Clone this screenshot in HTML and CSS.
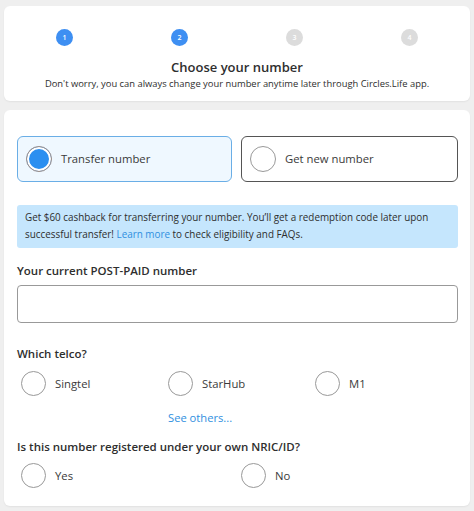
FILE: index.html
```html
<!DOCTYPE html>
<html lang="en">
<head>
    <meta charset="UTF-8">
    <meta name="viewport" content="width=device-width, initial-scale=1.0">
    <title>Choose your number</title>
    <link rel="stylesheet" href="styles.css">
</head>
<body>
    <div class="card steps-card">
        <ul class="steps">
            <li class="step done">1</li>
            <li class="step done">2</li>
            <li class="step">3</li>
            <li class="step">4</li>
        </ul>
        <h2>Choose your number</h2>
        <p class="subtitle">Don't worry, you can always change your number anytime later through Circles.Life app.</p>
    </div>

    <div class="card form-card">
        <div class="options">
            <div class="option selected">
                <span class="radio checked"></span>
                <span>Transfer number</span>
            </div>
            <div class="option">
                <span class="radio"></span>
                <span>Get new number</span>
            </div>
        </div>

        <div class="info">
            Get $60 cashback for transferring your number. You’ll get a redemption code later upon successful transfer! <a href="#">Learn more</a> to check eligibility and FAQs.
        </div>

        <label class="field-label" for="number">Your current POST-PAID number</label>
        <input type="text" id="number" class="text-input">

        <div class="field-label">Which telco?</div>
        <div class="choices three">
            <div class="choice"><span class="radio"></span>Singtel</div>
            <div class="choice"><span class="radio"></span>StarHub</div>
            <div class="choice"><span class="radio"></span>M1</div>
        </div>
        <div class="more-row">
            <a href="#" class="more">See others...</a>
        </div>

        <div class="field-label">Is this number registered under your own NRIC/ID?</div>
        <div class="choices two">
            <div class="choice"><span class="radio"></span>Yes</div>
            <div class="choice"><span class="radio"></span>No</div>
        </div>
    </div>
</body>
</html>
```

FILE: styles.css
```css
body {
    font-family: 'Open Sans', 'Noto Sans', sans-serif;
    margin: 0;
    padding: 6px 4px 5px 4px;
    background-color: #efefef;
    color: #2e2e2e;
}

.card {
    background-color: #ffffff;
    border-radius: 6px;
    box-shadow: 0px 1px 2px rgba(0, 0, 0, 0.06);
}

.steps-card {
    height: 95px;
    box-sizing: border-box;
    padding-top: 23px;
    text-align: center;
}

.steps {
    list-style: none;
    margin: 0;
    padding: 0 0 0 52px;
    display: flex;
    gap: 98px;
}

.step {
    width: 17px;
    height: 17px;
    flex-shrink: 0;
    border-radius: 50%;
    background-color: #dcdcdc;
    color: #ffffff;
    font-size: 7px;
    font-weight: 600;
    line-height: 17px;
    text-align: center;
}

.step.done {
    background-color: #3e8ff2;
}

.steps-card h2 {
    margin: 11px 0 0 0;
    font-size: 13px;
    font-weight: 600;
    line-height: 20px;
    color: #2e2e2e;
}

.subtitle {
    margin: 0;
    font-size: 9.4px;
    line-height: 14px;
}

.form-card {
    margin-top: 9px;
    height: 396px;
    box-sizing: border-box;
    padding: 26px 12px 0 13px;
}

.options {
    display: grid;
    grid-template-columns: 215px 217px;
    gap: 9px;
}

.option {
    height: 46px;
    box-sizing: border-box;
    border: 1px solid #555555;
    border-radius: 6px;
    display: flex;
    align-items: center;
    padding-left: 8px;
    padding-bottom: 1px;
    font-size: 11.3px;
    color: #3a3a3a;
}

.option.selected {
    border-color: #6aaee6;
    background-color: #eff8ff;
}

.radio {
    width: 25px;
    height: 25px;
    box-sizing: border-box;
    border: 1px solid #999999;
    border-radius: 50%;
    background-color: #ffffff;
    margin-right: 9px;
    flex-shrink: 0;
}

.option .radio {
    width: 26px;
    height: 26px;
}

.radio.checked {
    border-color: #a08f86;
    background-color: #2b8ff0;
    box-shadow: inset 0 0 0 2px #ffffff;
}

.info {
    margin-top: 23px;
    background-color: #c5e6fd;
    border-radius: 3px;
    padding: 4px 8px 5px 8px;
    font-size: 9.9px;
    line-height: 17px;
    color: #2e2e2e;
}

.info a, .more {
    color: #2f8fe0;
    text-decoration: none;
}

.field-label {
    display: block;
    font-size: 11.5px;
    font-weight: 600;
    color: #2e2e2e;
    line-height: 18px;
}

.info + .field-label {
    margin-top: 14px;
}

.text-input {
    display: block;
    width: 100%;
    box-sizing: border-box;
    height: 38px;
    margin-top: 5px;
    border: 1px solid #999999;
    border-radius: 4px;
    font-size: 12px;
}

.text-input + .field-label {
    margin-top: 22px;
}

.choices {
    display: grid;
    margin-top: 8px;
    padding-left: 4px;
}

.choices.three {
    grid-template-columns: 147px 147px 1fr;
}

.choices.two {
    grid-template-columns: 220px 1fr;
    margin-top: 7px;
}

.choice {
    display: flex;
    align-items: center;
    font-size: 11.3px;
    color: #3a3a3a;
}

.more-row {
    padding-left: 151px;
    margin-top: 13px;
    font-size: 11.2px;
    line-height: 18px;
}

.more-row + .field-label {
    margin-top: 11px;
}
```
